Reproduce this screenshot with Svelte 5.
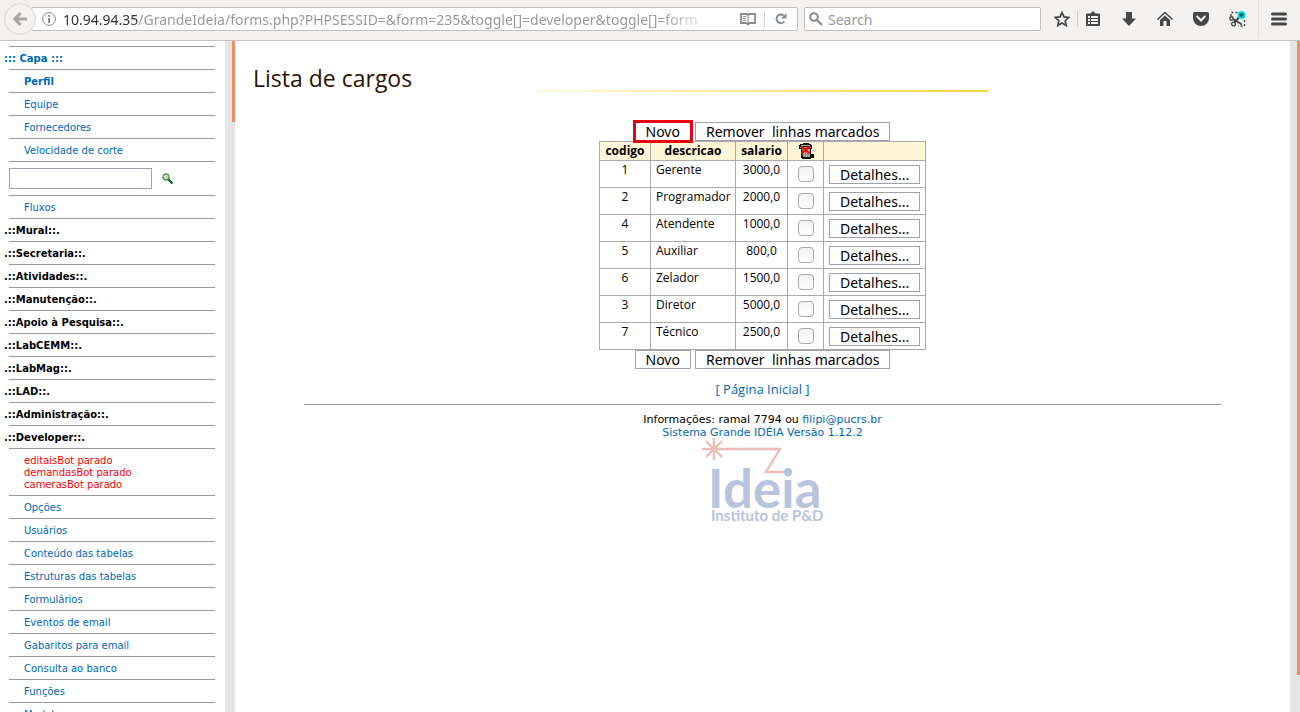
<script>
  const rows = [
    [1, 'Gerente', '3000,0'],
    [2, 'Programador', '2000,0'],
    [4, 'Atendente', '1000,0'],
    [5, 'Auxiliar', '800,0'],
    [6, 'Zelador', '1500,0'],
    [3, 'Diretor', '5000,0'],
    [7, 'Técnico', '2500,0']
  ];
  const pages = ['Equipe', 'Fornecedores', 'Velocidade de corte'];
  const sections = ['Mural', 'Secretaria', 'Atividades', 'Manutenção', 'Apoio à Pesquisa', 'LabCEMM', 'LabMag', 'LAD', 'Administração', 'Developer'];
  const bots = ['editaisBot parado', 'demandasBot parado', 'camerasBot parado'];
  const tools = ['Opções', 'Usuários', 'Conteúdo das tabelas', 'Estruturas das tabelas', 'Formulários', 'Eventos de email', 'Gabaritos para email', 'Consulta ao banco', 'Funções', 'Modelos'];
</script>

<div class="browser">
  <header class="toolbar">
    <button class="back" aria-label="Back">
      <svg width="16" height="16" viewBox="0 0 16 16"><path d="M8.5 2 3 8l5.500 6M3.500 8H15" fill="none" stroke="#a9a8a7" stroke-width="3.200" /></svg>
    </button>
    <div class="address">
      <svg width="14" height="14" viewBox="0 0 14 14"><circle cx="7" cy="7" r="6.400" fill="none" stroke="#858585" /><path d="M6.200 3h1.700v1.700H6.200zM6.200 6h1.700v5H6.200z" fill="#777" /></svg>
      <div class="url"><b>10.94.94.35</b>/GrandeIdeia/forms.php?PHPSESSID=&amp;form=235&amp;toggle[]=developer&amp;toggle[]=form</div>
      <button class="icon" aria-label="Reader view">
        <svg width="16" height="13" viewBox="0 0 16 13"><path d="M1 1h5.500L8 2l1.500-1H15v9h-5.500L8 11.500 6.500 10H1z" fill="none" stroke="#8a8a8a" stroke-width="1.800" /><path d="M8 2v8M3 3.500h3M3 5.500h3M3 7.500h3" fill="none" stroke="#8a8a8a" /></svg>
      </button>
      <span class="divider"></span>
      <button class="icon reload" aria-label="Reload">
        <svg width="12" height="12" viewBox="0 0 12 12"><path d="M9.300 8.500A4.300 4.300 0 1 1 8.600 2.500" fill="none" stroke="#818b93" stroke-width="2" /><path d="M11.500 0v5.500H6z" fill="#818b93" /></svg>
      </button>
    </div>
    <label class="search">
      <svg width="14" height="14" viewBox="0 0 14 14"><circle cx="5" cy="5" r="3.800" fill="none" stroke="#8a8a8a" stroke-width="2" /><path d="m8 8 5 5" stroke="#8a8a8a" stroke-width="2.300" /></svg>
      <input type="text" placeholder="Search" aria-label="Search" />
    </label>
    <nav class="actions" aria-label="Browser">
      <button aria-label="Bookmark"><svg width="16" height="16" viewBox="0 0 16 16"><path d="m8 1.500 2 4.400 4.700.6-3.500 3.200 1 4.800L8 12l-4.200 2.500 1-4.800-3.500-3.200 4.700-.6z" fill="none" stroke="#474747" stroke-width="1.700" /></svg></button>
      <span class="divider"></span>
      <button class="list" aria-label="Bookmarks list"><svg width="16" height="16" viewBox="0 0 16 16"><path d="M2 2.500h3.500L8 0l2.500 2.500H14q1 0 1 1V14q0 1-1 1H2q-1 0-1-1V3.500q0-1 1-1z" fill="#474747" /><path d="M3 5h2v2H3zM6 5h7v2H6zM3 8h2v2H3zM6 8h7v2H6zM3 11h2v2H3zM6 11h7v2H6z" fill="#f3f2f1" /></svg></button>
      <button aria-label="Downloads"><svg width="16" height="16" viewBox="0 0 16 16"><path d="M5 1h6v6.500h4L8 15 1 7.500h4z" fill="#474747" /></svg></button>
      <button aria-label="Home"><svg width="16" height="16" viewBox="0 0 16 16"><path d="M.5 8.500 8 1.500l7.500 7" fill="none" stroke="#474747" stroke-width="1.500" /><path d="M8 4.500 3 9v6h3.500v-5h3v5H13V9z" fill="#474747" /></svg></button>
      <button aria-label="Pocket"><svg width="16" height="16" viewBox="0 0 16 16"><path d="M1.500 1h13Q16 1 16 2.500V7A8 8 0 0 1 0 7V2.500Q0 1 1.500 1z" fill="#474747" /><path d="m4.200 5.500 3.800 4 3.800-4" fill="none" stroke="#f3f2f1" stroke-width="2" stroke-linecap="round" /></svg></button>
      <button aria-label="Capture"><svg width="17" height="16" viewBox="0 0 17 16"><path d="M2 5V1.500h8M15.500 9v6H9" fill="none" stroke="#474747" stroke-width="1.400" stroke-dasharray="2 2" /><circle cx="2.500" cy="7.500" r="1.700" fill="none" stroke="#474747" stroke-width="1.400" /><circle cx="4.500" cy="13" r="1.900" fill="none" stroke="#474747" stroke-width="1.400" /><path d="m4 8 9 5.500M5.500 11.500 11 5" stroke="#474747" stroke-width="2" /><circle cx="12.500" cy="4" r="4" fill="#00eaf2" /><path d="M12.500 1.500v5M10.300 2.800l4.400 2.400M14.700 2.800l-4.400 2.400" stroke="#164f68" stroke-width="1.500" /></svg></button>
      <span class="divider tall"></span>
      <button class="menu" aria-label="Menu"><svg width="16" height="14" viewBox="0 0 16 14"><path d="M1.500 2h13M1.500 7h13M1.500 12h13" stroke="#474747" stroke-width="3" stroke-linecap="round" /></svg></button>
    </nav>
  </header>

  <div class="frames">
    <nav class="sidebar" aria-label="Menu principal">
      <ul>
        <li class="head"><a href="#capa">::: Capa :::</a></li>
        <li><a href="#perfil"><b>Perfil</b></a></li>
        {#each pages as p}<li><a href="#pagina">{p}</a></li>{/each}
        <li class="find">
          <input type="text" aria-label="Buscar" />
          <button aria-label="Buscar"><svg width="11" height="11" viewBox="0 0 11 11"><path d="m6 6 4.500 4.500" stroke="#075e07" stroke-width="2.200" /><circle cx="4" cy="4" r="3.200" fill="#b9d8b2" stroke="#2d7131" /><path d="M2.500 4 4 2.500" stroke="#fff" /></svg></button>
        </li>
        <li><a href="#fluxos">Fluxos</a></li>
        {#each sections as s}<li class="head">.::{s}::.</li>{/each}
        <li class="bots">{#each bots as b}<div>{b}</div>{/each}</li>
        {#each tools as t}<li><a href="#ferramenta">{t}</a></li>{/each}
      </ul>
    </nav>
    <div class="rail"><span class="short"></span></div>
    <main>
      <h1>Lista de cargos</h1>
      <div class="rule"></div>
      <div class="buttons"><button class="marked">Novo</button><button>Remover&nbsp; linhas marcados</button></div>
      <table>
        <thead>
          <tr>
            <th class="code">codigo</th><th class="desc">descricao</th><th class="pay">salario</th>
            <th class="check"><svg width="16" height="16" viewBox="0 0 16 16" role="img" aria-label="Remover"><path d="M2 1h3V0h6v1h2v1h1v4h-1v5h3v4h-3v1H4v-1H3V6H1V2h1z" fill="#12120c" /><path d="M3 2h9v1H3zM2 4h11v1H2z" fill="#b4b49c" /><path d="M4 6h8v8H5z" fill="#85857a" /><path d="M6 6v8M8.500 6v8M11 6v8" stroke="#d0d0c0" stroke-width=".8" /><path d="m3.500 3.500 8 7M11.500 3.500l-8 7" stroke="#fa0808" stroke-width="2" /></svg></th>
            <th class="more"></th>
          </tr>
        </thead>
        <tbody>
          {#each rows as [id, name, salary]}
            <tr>
              <td class="mid">{id}</td><td>{name}</td><td class="mid">{salary}</td>
              <td class="box"><input type="checkbox" aria-label={'Marcar ' + name} /></td>
              <td class="detail"><button>Detalhes...</button></td>
            </tr>
          {/each}
        </tbody>
      </table>
      <div class="buttons"><button>Novo</button><button>Remover&nbsp; linhas marcados</button></div>
      <a class="start" href="#inicio">[ Página Inicial ]</a>
      <footer>
        <div>Informações: ramal 7794 ou <a href="#contato">filipi@pucrs.br</a></div>
        <div><a href="#versao">Sistema Grande IDÉIA Versão 1.12.2</a></div>
        <svg class="logo" width="124" height="86" viewBox="0 0 124 86">
          <path d="M1 10h78L65 33h21M13-1v22M5 2l16 16M21 2 5 18" fill="none" stroke="#efbcb9" stroke-width="2.400" />
          <text x="7" y="69" class="word">Ideia</text>
          <text x="10" y="82" class="tag">Instituto de P&amp;D</text>
        </svg>
      </footer>
    </main>
    <div class="rail"><span class="long"></span></div>
  </div>
</div>

<style>
  :global(body) { margin: 0; overflow: hidden; background: #fff; }
  .browser { height: 100vh; display: flex; flex-direction: column; font-family: "DejaVu Sans", sans-serif; }
  button, input { font: inherit; box-sizing: border-box; margin: 0; }
  a { color: #0068b3; text-decoration: none; }
  svg { display: block; }
  .toolbar { flex: none; height: 41px; box-sizing: border-box; display: flex; align-items: center; background: #f3f2f1; border-bottom: 1px solid #c6c2be; padding: 0 13px 2px 4px; font-family: "Noto Sans", sans-serif; font-size: 14px; }
  .toolbar button { border: 0; background: none; padding: 0; display: grid; place-items: center; flex: none; }
  .toolbar .back { width: 32px; height: 32px; border: 1px solid #d9d6d3; border-radius: 50%; background: #f3f2f1; z-index: 1; }
  .address { flex: 1; min-width: 0; height: 24px; box-sizing: border-box; display: flex; align-items: center; background: #fff; border: 1px solid #c4beb9; border-radius: 2px; margin-left: -5px; padding: 0 10px; color: #999; }
  .url { flex: 1; min-width: 0; overflow: hidden; white-space: nowrap; margin: 0 18px 0 7px; mask-image: linear-gradient(to left, transparent 10px, #000 60px); }
  .url b { color: #333; font-weight: 400; }
  .divider { width: 1px; height: 16px; background: #cfccc9; flex: none; }
  .address .divider { margin: 0 10px 0 8px; }
  .search { width: 237px; height: 24px; box-sizing: border-box; display: flex; align-items: center; gap: 5px; margin-left: 6px; padding: 0 4px; background: #fff; border: 1px solid #c4beb9; border-radius: 2px; }
  .search input { flex: 1; min-width: 0; border: 0; padding: 0; background: none; outline: 0; }
  .search input::placeholder { color: #999; opacity: 1; }
  .actions { display: flex; align-items: center; margin-left: 13px; gap: 20px; }
  .actions .divider { margin: 0 -13px; }
  .actions .tall { height: 38px; margin: 0 -8px; background: #e4e1df; }

  .frames { flex: 1; min-height: 0; display: flex; }
  .sidebar { width: 225px; flex: none; overflow: hidden; font-size: 10px; line-height: 12px; }
  ul { list-style: none; margin: 5px 10px 0 9px; padding: 0; }
  li { border-top: 1px solid #999; padding: 6px 0 4px 15px; }
  .head { font-weight: 700; padding-left: 0; text-indent: -5px; }
  .find { display: flex; align-items: center; gap: 10px; padding: 6px 0; }
  .find input { width: 143px; height: 21px; border: 1px solid #a0a0b0; background: #fff; }
  .find button { border: 0; padding: 0; background: none; }
  .bots { color: #f00; }
  .rail { width: 10px; flex: none; background: #e5e5e5; display: flex; justify-content: flex-end; }
  .rail span { width: 3px; background: #f18d65; }
  .short { height: 81px; }
  .long { height: 634px; }

  main { flex: 1; min-width: 0; display: flex; flex-direction: column; align-items: center; overflow: hidden; font-family: "Open Sans", sans-serif; font-size: 12px; line-height: 16px; }
  h1 { align-self: flex-start; margin: 24px 0 0 18px; font-size: 23px; line-height: 26px; font-weight: 400; color: #2e1400; }
  .rule { width: 450px; height: 2px; background: linear-gradient(to right, #fff8d8, #f6d43c); margin: -1px 0 30px; }
  .buttons { display: flex; gap: 4px; height: 19px; }
  main button { height: 19px; border: 1px solid #a0a0b0; background: #fff; color: #000; padding: 0 10px; font-family: "Noto Sans", sans-serif; font-size: 14px; line-height: 17px; white-space: nowrap; }
  main .marked { outline: 3px solid #e90012; outline-offset: -1px; border-color: #fff; position: relative; }
  table { border-collapse: collapse; table-layout: fixed; width: 327px; }
  th, td { border: 1px solid #aaa; box-sizing: border-box; padding: 0 5px; vertical-align: top; text-align: left; white-space: nowrap; }
  th { height: 19px; padding: 0; text-align: center; vertical-align: middle; background: #fff5d7; font-weight: 700; }
  td { height: 27px; padding-top: 1px; }
  .code { width: 51px; }
  .desc { width: 85px; }
  .pay { width: 52px; }
  .check { width: 36px; }
  .more { width: 102px; }
  .check svg { margin: 0 auto; }
  td.mid { text-align: center; }
  td.box, td.detail { text-align: center; padding: 4px 5px 0; }
  td.detail button { display: block; width: 91px; }
  td.box input { appearance: none; display: block; width: 16px; height: 16px; margin: 1px auto 0; border: 1px solid #aaa; border-radius: 4px; background: linear-gradient(#f2f2f2, #fff); }
  .start { margin-top: 12px; font-size: 13px; }
  footer { align-self: stretch; margin: 7px 69px 0; padding-top: 8px; border-top: 1px solid #999; display: flex; flex-direction: column; align-items: center; font-family: "DejaVu Sans", sans-serif; font-size: 11px; line-height: 13px; }
  .logo { overflow: visible; }
  .logo text { fill: #b8c3dd; font-family: Lato, sans-serif; }
  .logo .word { font-size: 53px; font-weight: 700; }
  .logo .tag { font-size: 15px; font-weight: 700; }
</style>
